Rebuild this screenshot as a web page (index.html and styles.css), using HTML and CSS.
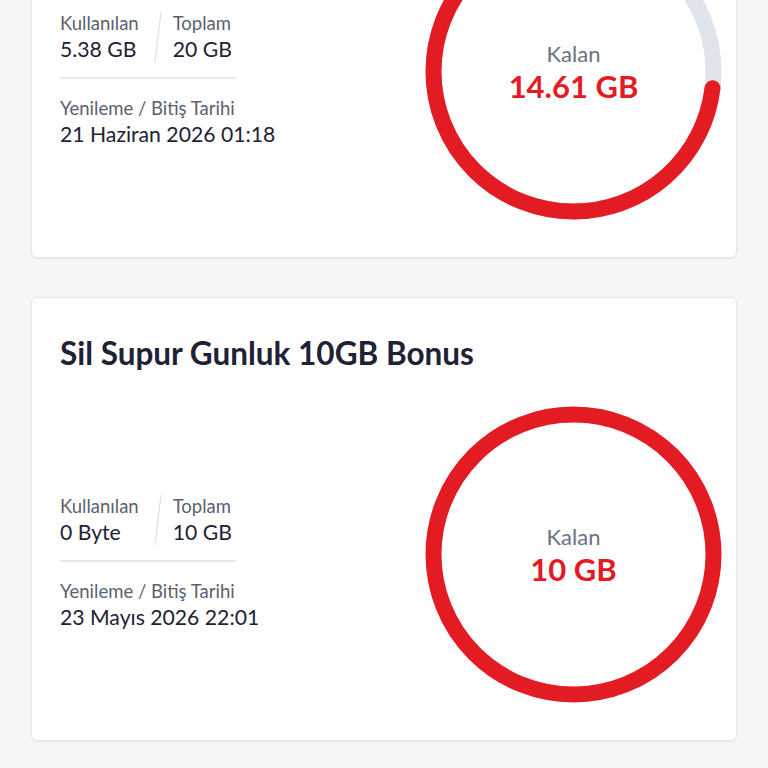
FILE: index.html
```html
<!DOCTYPE html>
<html lang="tr">
<head>
<meta charset="utf-8">
<title>Paketler</title>
<link rel="stylesheet" href="styles.css">
</head>
<body>
<div class="list">
  <section class="card">
    <h2 class="title">Günlük 20GB Paket</h2>
    <div class="body">
      <div class="stats">
        <div class="top">
          <div class="cell">
            <div class="label">Kullanılan</div>
            <div class="value">5.38 GB</div>
          </div>
          <svg class="slash" width="10" height="52" viewBox="0 0 10 52"><line x1="8" y1="1" x2="2" y2="51" stroke="#dde0e6" stroke-width="1.2"/></svg>
          <div class="cell">
            <div class="label">Toplam</div>
            <div class="value">20 GB</div>
          </div>
        </div>
        <div class="bottom">
          <div class="label">Yenileme / Bitiş Tarihi</div>
          <div class="value">21 Haziran 2026 01:18</div>
        </div>
      </div>
      <div class="ring">
        <svg width="297" height="297" viewBox="0 0 297 297">
          <circle cx="148.5" cy="148.5" r="140" fill="none" stroke="#dfe3ec" stroke-width="16"/>
          <circle cx="148.5" cy="148.5" r="140" fill="none" stroke="#e31b23" stroke-width="16" stroke-linecap="round" stroke-dasharray="642.6 879.6" transform="translate(297 0) scale(-1 1) rotate(-90 148.5 148.5)"/>
        </svg>
        <div class="center">
          <div class="kalan">Kalan</div>
          <div class="left">14.61 GB</div>
        </div>
      </div>
    </div>
  </section>
  <section class="card">
    <h2 class="title">Sil Supur Gunluk 10GB Bonus</h2>
    <div class="body">
      <div class="stats">
        <div class="top">
          <div class="cell">
            <div class="label">Kullanılan</div>
            <div class="value">0 Byte</div>
          </div>
          <svg class="slash" width="10" height="52" viewBox="0 0 10 52"><line x1="8" y1="1" x2="2" y2="51" stroke="#dde0e6" stroke-width="1.2"/></svg>
          <div class="cell">
            <div class="label">Toplam</div>
            <div class="value">10 GB</div>
          </div>
        </div>
        <div class="bottom">
          <div class="label">Yenileme / Bitiş Tarihi</div>
          <div class="value">23 Mayıs 2026 22:01</div>
        </div>
      </div>
      <div class="ring">
        <svg width="297" height="297" viewBox="0 0 297 297">
          <circle cx="148.5" cy="148.5" r="140" fill="none" stroke="#e31b23" stroke-width="16"/>
        </svg>
        <div class="center">
          <div class="kalan">Kalan</div>
          <div class="left">10 GB</div>
        </div>
      </div>
    </div>
  </section>
</div>
</body>
</html>
```

FILE: styles.css
```css
html, body {
  margin: 0;
  padding: 0;
  background: #f5f6f8;
}
body {
  font-family: Lato, "Noto Sans", sans-serif;
  color: #1f2235;
}
.list {
  display: flex;
  flex-direction: column;
  gap: 39px;
  padding: 0 31px 40px;
  margin-top: -186px;
}
.card {
  background: #fff;
  border: 1px solid #e3e6eb;
  border-radius: 6px;
  box-shadow: 0 1px 2px rgba(0, 0, 0, 0.06);
  padding: 38px 14px 37px 28px;
}
.title {
  margin: 0;
  font-size: 31.5px;
  line-height: 34px;
  font-weight: 700;
  color: #1f2235;
}
.body {
  display: flex;
  align-items: center;
  justify-content: space-between;
  margin-top: 36px;
}
.stats {
  display: flex;
  flex-direction: column;
  margin-top: 16px;
}
.top {
  display: flex;
  align-items: stretch;
  width: 176px;
  padding-bottom: 14px;
  border-bottom: 2px solid #e6e8ee;
}
.slash {
  margin: 0 10px 0 14px;
}
.label {
  font-size: 18.5px;
  line-height: 24px;
  color: #5b6170;
}
.value {
  font-size: 21.2px;
  line-height: 28px;
  color: #1f2235;
}
.bottom {
  padding-top: 17px;
}
.ring {
  position: relative;
  width: 297px;
  height: 297px;
}
.ring svg {
  display: block;
}
.center {
  position: absolute;
  inset: 0;
  display: flex;
  flex-direction: column;
  align-items: center;
  justify-content: center;
}
.kalan {
  font-size: 22px;
  line-height: 28px;
  color: #6b717d;
}
.left {
  font-size: 31px;
  line-height: 36px;
  font-weight: 700;
  color: #e31b23;
}
```
